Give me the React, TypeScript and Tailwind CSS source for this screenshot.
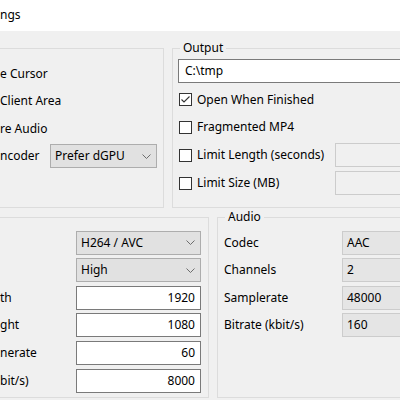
import React from "react";

function Chevron() {
  return (
    <svg width="9" height="5" viewBox="0 0 9 5" className="shrink-0">
      <polyline points="0.5,0.5 4.5,4.5 8.5,0.5" fill="none" stroke="#6d6d6d" strokeWidth="1" />
    </svg>
  );
}

function Select({ value, className }: { value: string; className: string }) {
  return (
    <div className={`flex items-center justify-between bg-[#e1e1e1] border border-[#adadad] pl-[4px] pr-[5px] ${className}`}>
      <span>{value}</span>
      <Chevron />
    </div>
  );
}

function NumBox({ value }: { value: string }) {
  return (
    <div className="flex items-center justify-end w-[125px] h-[24px] bg-white border border-[#7a7a7a] pr-[5px]">{value}</div>
  );
}

function GrayBox({ value }: { value: string }) {
  return (
    <div className="flex items-center w-[80px] h-[24px] bg-[#e5e5e5] border border-[#cccccc] pl-[4px] shrink-0">{value}</div>
  );
}

function Check({ checked }: { checked?: boolean }) {
  return (
    <div className="w-[13px] h-[13px] border border-[#333333] bg-white shrink-0 flex items-center justify-center">
      {checked && (
        <svg width="11" height="11" viewBox="0 0 11 11">
          <polyline points="1.5,5.5 4,8 9.5,2.5" fill="none" stroke="#333333" strokeWidth="1.1" />
        </svg>
      )}
    </div>
  );
}

export default function App() {
  return (
    <div className="w-[400px] h-[400px] overflow-hidden bg-[#f0f0f0] text-[12px] leading-[16px] text-black font-['Noto_Sans',sans-serif]">
      {/* title bar */}
      <div className="h-[31px] bg-white flex items-center pb-[1px]">
        <span>ngs</span>
      </div>

      <div className="flex flex-col pt-[17px]">
        {/* top row */}
        <div className="flex gap-[8px] h-[160px]">
          <div className="w-[164px] shrink-0 border-y border-r border-[#dcdcdc] flex flex-col pt-[11px]">
            <div className="h-[27px] flex items-center">e Cursor</div>
            <div className="h-[28px] flex items-center">Client Area</div>
            <div className="h-[27px] flex items-center">re Audio</div>
            <div className="h-[28px] flex items-center">
              <span className="w-[50px] shrink-0">ncoder</span>
              <Select value="Prefer dGPU" className="w-[107px] h-[24px]" />
            </div>
          </div>

          <div className="w-[240px] shrink-0 border border-[#dcdcdc] flex flex-col pl-[5px]">
            <div className="-mt-[9px] ml-[2px] w-fit bg-[#f0f0f0] px-[3px] h-[16px]">Output</div>
            <div className="mt-[3px] h-[24px] bg-white border border-[#7a7a7a] flex items-center pl-[6px]">C:\tmp</div>
            <div className="mt-[3px] flex flex-col pl-[1px]">
              <div className="h-[27px] flex items-center gap-[5px]">
                <Check checked />
                <span>Open When Finished</span>
              </div>
              <div className="h-[28px] flex items-center gap-[5px]">
                <Check />
                <span>Fragmented MP4</span>
              </div>
              <div className="h-[28px] flex items-center gap-[5px]">
                <Check />
                <span className="w-[133px] shrink-0">Limit Length (seconds)</span>
                <div className="w-[80px] h-[24px] bg-[#f0f0f0] border border-[#cccccc] shrink-0" />
              </div>
              <div className="h-[28px] flex items-center gap-[5px]">
                <Check />
                <span className="w-[133px] shrink-0">Limit Size (MB)</span>
                <div className="w-[80px] h-[24px] bg-[#f0f0f0] border border-[#cccccc] shrink-0" />
              </div>
            </div>
          </div>
        </div>

        {/* bottom row */}
        <div className="flex gap-[8px] mt-[9px] h-[181px]">
          <div className="w-[209px] shrink-0 border-y border-r border-[#dcdcdc] flex flex-col pt-[11px]">
            <div className="h-[27px] flex items-center">
              <span className="w-[76px] shrink-0"></span>
              <Select value="H264 / AVC" className="w-[125px] h-[24px]" />
            </div>
            <div className="h-[28px] flex items-center">
              <span className="w-[76px] shrink-0"></span>
              <Select value="High" className="w-[125px] h-[24px]" />
            </div>
            <div className="h-[27px] flex items-center">
              <span className="w-[76px] shrink-0">th</span>
              <NumBox value="1920" />
            </div>
            <div className="h-[28px] flex items-center">
              <span className="w-[76px] shrink-0">ght</span>
              <NumBox value="1080" />
            </div>
            <div className="h-[28px] flex items-center">
              <span className="w-[76px] shrink-0">nerate</span>
              <NumBox value="60" />
            </div>
            <div className="h-[28px] flex items-center">
              <span className="w-[76px] shrink-0">bit/s)</span>
              <NumBox value="8000" />
            </div>
          </div>

          <div className="w-[200px] shrink-0 border border-[#dcdcdc] flex flex-col pl-[6px]">
            <div className="-mt-[9px] ml-[1px] w-fit bg-[#f0f0f0] px-[3px] h-[16px]">Audio</div>
            <div className="mt-[4px] flex flex-col">
              <div className="h-[27px] flex items-center">
                <span className="w-[118px] shrink-0">Codec</span>
                <GrayBox value="AAC" />
              </div>
              <div className="h-[28px] flex items-center">
                <span className="w-[118px] shrink-0">Channels</span>
                <GrayBox value="2" />
              </div>
              <div className="h-[27px] flex items-center">
                <span className="w-[118px] shrink-0">Samplerate</span>
                <GrayBox value="48000" />
              </div>
              <div className="h-[28px] flex items-center">
                <span className="w-[118px] shrink-0">Bitrate (kbit/s)</span>
                <GrayBox value="160" />
              </div>
            </div>
          </div>
        </div>
      </div>
    </div>
  );
}
